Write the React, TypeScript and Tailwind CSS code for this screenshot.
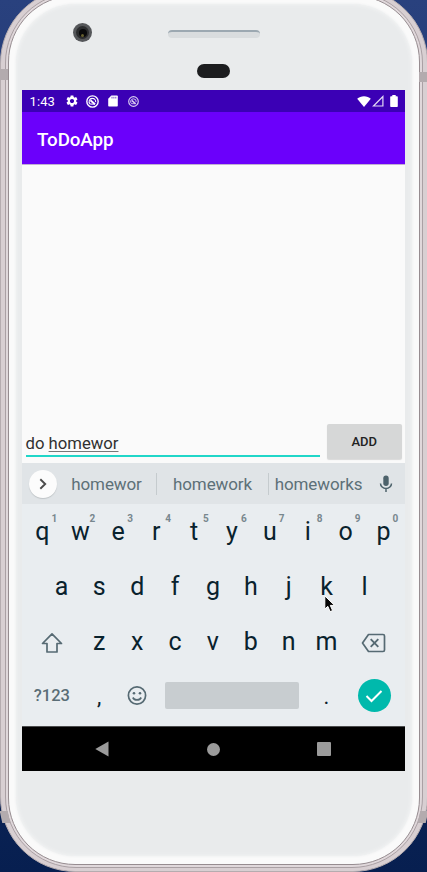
import React from "react";

const topRow = ["q", "w", "e", "r", "t", "y", "u", "i", "o", "p"];
const homeRow = ["a", "s", "d", "f", "g", "h", "j", "k", "l"];
const bottomRow = ["z", "x", "c", "v", "b", "n", "m"];

function Key({ label, hint }: { label: string; hint?: string }) {
  return (
    <div className="relative flex h-full w-[37.9px] shrink-0 items-center justify-center text-[25px] leading-none text-[#09222d]">
      {label}
      {hint && (
        <span className="absolute left-[28px] top-[10px] text-[10px] font-bold leading-none text-[#78878e]">{hint}</span>
      )}
    </div>
  );
}

function Swirl({ size, className }: { size: number; className?: string }) {
  return (
    <svg width={size} height={size} viewBox="0 0 14 14" fill="none" stroke="#fff" className={className}>
      <circle cx="7" cy="7" r="6.1" strokeWidth="1.5" />
      <path d="M4.6 9.8A3.500 3.500 0 0 1 7 3.600A3.500 3.500 0 0 1 10.400 7.600" strokeWidth="1.200" />
      <path d="M4.700 5.600L9.700 10" strokeWidth="2" />
      <path d="M4.600 9.800H9.600" strokeWidth="1.100" />
    </svg>
  );
}

function StatusBar() {
  return (
    <div className="flex h-[22px] items-center bg-[#3b00b5] pl-[7.500px] pr-[7px] text-white">
      <span className="w-[36px] text-[13px] leading-none tracking-[0.1px]">1:43</span>
      <svg width="14" height="14" viewBox="0 0 24 24" fill="#fff" className="-ml-[1px]">
        <path d="M19.14 12.94c.04-.3.06-.61.06-.94 0-.32-.02-.64-.07-.94l2.03-1.58c.18-.14.23-.41.12-.61l-1.92-3.32c-.12-.22-.37-.29-.59-.22l-2.39.96c-.5-.38-1.03-.7-1.62-.94l-.36-2.54c-.04-.24-.24-.41-.48-.41h-3.84c-.24 0-.43.17-.47.41l-.36 2.54c-.59.24-1.13.57-1.62.94l-2.39-.96c-.22-.08-.47 0-.59.22L2.74 8.87c-.12.21-.08.47.12.61l2.03 1.58c-.05.3-.09.63-.09.94s.02.64.07.94l-2.03 1.58c-.18.14-.23.41-.12.61l1.92 3.32c.12.22.37.29.59.22l2.39-.96c.5.38 1.03.7 1.62.94l.36 2.54c.05.24.24.41.48.41h3.84c.24 0 .44-.17.47-.41l.36-2.54c.59-.24 1.13-.56 1.62-.94l2.39.96c.22.08.47 0 .59-.22l1.92-3.32c.12-.22.07-.47-.12-.61l-2.01-1.58zM12 15.6c-1.98 0-3.6-1.62-3.6-3.6s1.62-3.6 3.6-3.6 3.6 1.62 3.6 3.6-1.62 3.6-3.6 3.6z" />
      </svg>
      <Swirl size={13} className="ml-[7px]" />
      <svg width="10" height="12" viewBox="0 0 10 12" className="ml-[9px]">
        <path d="M3.4 0.5H9a.8.8 0 0 1 .8.8v9.4a.8.8 0 0 1-.8.8H1a.8.8 0 0 1-.8-.8V3.8z" fill="#fff" />
        <path d="M4 1.8v1.7M5.9 1.8v1.7M7.8 1.8v1.7" stroke="#3b00b5" strokeWidth=".7" />
      </svg>
      <Swirl size={11} className="ml-[10px] opacity-80" />
      <svg width="14" height="11" viewBox="0 0 14 11" className="ml-auto">
        <path d="M7 11L.2 2.8C2 1.200 4.300.3 7 .3s5 .9 6.800 2.500z" fill="#fff" />
      </svg>
      <svg width="12" height="12" viewBox="0 0 12 12" className="ml-[1px]">
        <path d="M10.900 1.500V11H1.500z" fill="none" stroke="#e2d9f5" strokeWidth="1.200" />
      </svg>
      <svg width="8" height="12" viewBox="0 0 8 12" className="ml-[6px]">
        <path d="M2.300 0h3.400v1.200H7a.8.800 0 0 1 .8.800v9.200a.8.800 0 0 1-.8.800H1a.8.800 0 0 1-.8-.8V2a.8.800 0 0 1 .8-.8h1.300z" fill="#fff" />
      </svg>
    </div>
  );
}

function Suggestions() {
  return (
    <div className="flex h-[41px] items-center bg-[#e0e4e7] pt-px text-[17px] leading-none tracking-[-0.1px] text-[#5d7078]">
      <div className="ml-[7px] flex size-7 shrink-0 items-center justify-center rounded-full bg-[#fcfcfc] shadow-[0_1px_1px_#bfc4c7]">
        <svg width="8" height="12" viewBox="0 0 8 12" fill="none" stroke="#4c4c4c" strokeWidth="1.900">
          <path d="M1.300 1.200L6.200 6L1.300 10.800" />
        </svg>
      </div>
      <div className="flex w-[99px] justify-center pt-px">homewor</div>
      <div className="h-[22px] w-px bg-[#c5cbce]" />
      <div className="flex w-[111px] justify-center pt-px">homework</div>
      <div className="h-[22px] w-px bg-[#c5cbce]" />
      <div className="flex w-[99px] justify-center pt-px">homeworks</div>
      <svg width="14" height="18" viewBox="0 0 14 18" className="ml-[11px]">
        <rect x="4.300" y="0.500" width="5.400" height="10.500" rx="2.700" fill="#4d626b" />
        <path d="M1.500 8.500a5.500 5 0 0 0 11 0M7 13.500V17" fill="none" stroke="#4d626b" strokeWidth="1.500" />
      </svg>
    </div>
  );
}

function Keyboard() {
  return (
    <div className="flex h-[222px] flex-col bg-[#e9edf0] pl-[1.500px] pr-[2.500px]">
      <div className="flex h-[54px]">
        {topRow.map((k, i) => (
          <Key key={k} label={k} hint={String((i + 1) % 10)} />
        ))}
      </div>
      <div className="flex h-[56px] justify-center">
        {homeRow.map((k) => (
          <Key key={k} label={k} />
        ))}
      </div>
      <div className="flex h-[55px] items-center">
        <div className="flex w-[56.800px] justify-center pt-[2px]">
          <svg width="22" height="22" viewBox="0 0 22 22" fill="none" stroke="#566a73" strokeWidth="1.700" strokeLinejoin="round">
            <path d="M11 1.800L1.500 11.500H6V20h10V11.500h4.500z" />
          </svg>
        </div>
        {bottomRow.map((k) => (
          <Key key={k} label={k} />
        ))}
        <div className="flex w-[56.800px] justify-center pt-[2px]">
          <svg width="25" height="20" viewBox="0 0 25 20" fill="none" stroke="#566a73" strokeWidth="1.700" strokeLinejoin="round">
            <path d="M7.500 1.500H22a1.500 1.500 0 0 1 1.500 1.500v14a1.500 1.500 0 0 1-1.500 1.500H7.500L1.500 10z" />
            <path d="M9.700 6.200l7.600 7.600M17.300 6.200l-7.600 7.600" strokeWidth="1.900" />
          </svg>
        </div>
      </div>
      <div className="flex h-[53px] items-center">
        <div className="flex w-[56.800px] justify-center pt-[2px] text-[16.500px] font-medium leading-none text-[#5a6d76]">?123</div>
        <div className="flex w-[37.900px] justify-center pt-[3px] text-[22px] leading-none text-[#09222d]">,</div>
        <div className="flex w-[37.900px] justify-center">
          <svg width="20" height="20" viewBox="0 0 20 20" fill="none" stroke="#566a73" strokeWidth="1.700">
            <circle cx="10" cy="9.500" r="8.600" />
            <path d="M5.800 11.500c1.700 3.200 6.700 3.200 8.400 0" />
            <circle cx="7" cy="7.200" r="1.300" fill="#566a73" stroke="none" />
            <circle cx="13" cy="7.200" r="1.300" fill="#566a73" stroke="none" />
          </svg>
        </div>
        <div className="ml-[9px] mr-[9px] h-[27px] w-[133.500px] rounded-[2px] bg-[#c8cdd0]" />
        <div className="flex w-[37.900px] justify-center pt-[3px] text-[22px] leading-none text-[#09222d]">.</div>
        <div className="ml-[12.500px] flex size-[33px] items-center justify-center rounded-full bg-[#00b9ac]">
          <svg width="18" height="14" viewBox="0 0 18 14" fill="none" stroke="#fff" strokeWidth="2">
            <path d="M1.500 7l5 5L16.500 2" />
          </svg>
        </div>
      </div>
    </div>
  );
}

function Screen() {
  return (
    <div className="flex h-[681px] w-[383px] flex-col bg-[#fafafa]">
      <StatusBar />
      <div className="flex h-[52px] items-center bg-[#6b00fb] pl-[15px] pt-[4px] text-[18.800px] font-medium leading-none tracking-[-0.100px] text-white">
        <span>ToDoApp</span>
      </div>
      <div className="h-px bg-[#c0aed2]" />
      <div className="flex-1" />
      <div className="flex h-[39px] items-start pl-1 pr-[3px]">
        <div className="mt-[7px] h-[26px] w-[294px] border-b-2 border-[#20d6c8] pt-[5px] text-[16.700px] leading-none text-[#303030]">
          <span className="-ml-[0.500px]">do </span>
          <span className="underline decoration-[#777] decoration-1 underline-offset-2">homewor</span>
        </div>
        <div className="ml-auto flex h-[35px] w-[75.500px] items-center justify-center rounded-[2px] bg-[#d6d7d7] text-[13px] font-medium leading-none text-[#222] shadow-[0_1px_1px_#d9d9d9]">
          ADD
        </div>
      </div>
      <Suggestions />
      <Keyboard />
      <div className="flex h-[45px] items-center border-t border-[#4b4c4d] bg-black">
        <svg width="14" height="16" viewBox="0 0 14 16" className="ml-[73px]">
          <path d="M13.500.5v15L.3 8z" fill="#9b9b9b" />
        </svg>
        <div className="ml-[98px] size-[13px] rounded-full bg-[#9b9b9b]" />
        <div className="ml-[97px] size-[14px] rounded-[1px] bg-[#9b9b9b]" />
      </div>
    </div>
  );
}

export default function App() {
  return (
    <div className="relative h-[872px] w-[427px] overflow-hidden bg-linear-to-b from-[#29417e] via-[#182f68] to-[#071f50] font-[Roboto,sans-serif]">
      <div className="-mt-[12px] h-[884px] w-[428px] rounded-[75px] border border-[#b5acaf] bg-[#d8cfd2] px-[4px] py-[3px]">
        <div className="h-full rounded-[71px] border border-[#aaa0a4] bg-[#e0d8db] p-[2px]">
          <div className="h-full rounded-[67px] border border-[#968c90] bg-[#fafafa] px-[7px] py-[8px]">
            <div className="flex h-full flex-col rounded-[60px] bg-[#e9ebec] pl-[6px] shadow-[0_0_3px_#e9ebec,inset_0_0_4px_#f6f7f7]">
              <div className="flex h-[86px] flex-col">
                <div className="flex pt-[19px]">
                  <div className="ml-[51px] flex size-[19px] items-center justify-center rounded-full bg-[#55575a]">
                    <div className="flex size-[13px] items-center justify-center rounded-full bg-[#2c2d2f]">
                      <div className="flex size-[8px] items-end justify-center rounded-full bg-[#090a0b]">
                        <div className="size-[3px] rounded-full bg-[#66602f]" />
                      </div>
                    </div>
                  </div>
                  <div className="ml-[76px] mt-[7px] h-[8px] w-[92px] rounded-[4px] border-t-2 border-[#9ca8b1] bg-[#d9dcde]" />
                </div>
                <div className="ml-[175px] mt-[22px] h-[14px] w-[33px] rounded-full bg-[#1c1d1f]" />
              </div>
              <Screen />
            </div>
          </div>
        </div>
      </div>
      <div className="absolute left-0 top-[69px] h-[11px] w-[8px] bg-[#b3abae]" />
      <div className="absolute right-0 top-[72px] h-[10px] w-[8px] bg-[#b3abae]" />
      <div className="absolute left-[1px] top-[811px] h-[12px] w-[8px] skew-x-[12deg] bg-[#b3abae]" />
      <div className="absolute right-0 top-[811px] h-[12px] w-[8px] -skew-x-[12deg] bg-[#b3abae]" />
      <svg width="12" height="18" viewBox="0 0 12 18" className="absolute left-[324px] top-[595px]">
        <path d="M.8.900v13.200l3-2.800 2.300 5.300 2.500-1-2.300-5.200h4.300z" fill="#050505" stroke="#fff" strokeWidth="1" />
      </svg>
    </div>
  );
}
